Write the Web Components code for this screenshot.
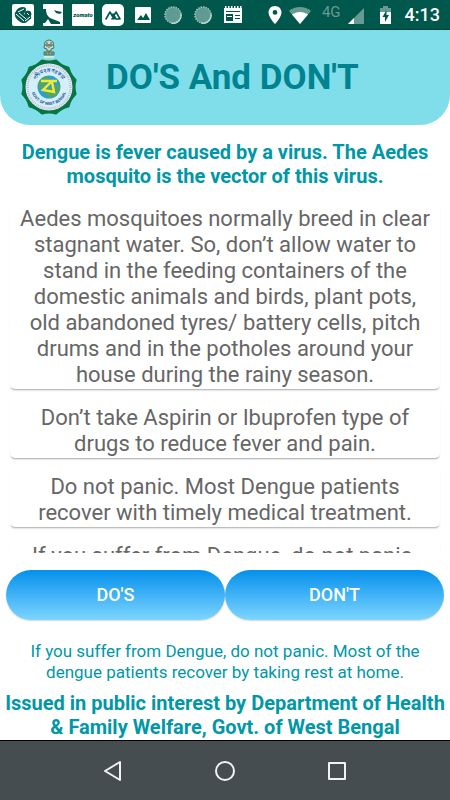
<!DOCTYPE html>
<html lang="en">
<head>
<meta charset="utf-8">
<meta name="viewport" content="width=device-width, initial-scale=1">
<title>DO'S And DON'T</title>
<style>
    body {
        margin: 0;
        background-color: #fff;
        font-family: Roboto, "Noto Sans", sans-serif;
    }
</style>
</head>
<body>
<dengue-app></dengue-app>

<template id="status-bar">
    <style>
    :host {
        display: flex;
        justify-content: space-between;
        align-items: center;
        box-sizing: border-box;
        height: 30px;
        padding: 0 10px 0 12px;
        background-color: #00574b;
        border-bottom: 1px solid #003c30;
        color: #fff;
    }
    div {
        display: flex;
        align-items: center;
    }
    .apps {
        gap: 8px;
    }
    svg {
        display: block;
    }
    .net {
        color: #669a93;
        font-size: 15px;
        line-height: 16px;
        margin: 0 6px 6px 9px;
    }
    .battery {
        margin: 0 14px 0 16px;
    }
    time {
        font-size: 18px;
        font-weight: 500;
        line-height: 20px;
    }
    </style>
    <div class="apps">
        <svg width="22" height="22" viewBox="0 0 22 22">
            <rect width="22" height="22" rx="2" fill="#fff"/>
            <g fill="#00574b" stroke="#00574b">
                <ellipse cx="9" cy="7" rx="5" ry="3" transform="rotate(-25 9 7)"/>
                <ellipse cx="9" cy="13" rx="7" ry="4" transform="rotate(42 9 13)"/>
                <circle cx="16" cy="10" r="3"/>
                <path d="M12 16L18 12L19 14L14 18Z"/>
            </g>
            <path d="M6 8L12 5M4 10L12 17M7 9L14 15M15 9L17 11M13 17L18 13" fill="none" stroke="#fff"/>
        </svg>
        <svg width="22" height="22" viewBox="0 0 22 22">
            <rect x="1" width="20" height="22" rx="1" fill="#fff"/>
            <path d="M1 5H4C4 9 5 12 8 14L18 18V20H9L6 15L3 19H1Z" fill="#00574b"/>
            <path d="M12 6L15 7L20 8L18 10L14 9Z" fill="#00574b"/>
        </svg>
        <svg width="22" height="22" viewBox="0 0 22 22">
            <rect width="22" height="22" rx="1" fill="#fff"/>
            <text x="11" y="13" text-anchor="middle" font-size="6" font-weight="900" font-style="italic" fill="#00574b">zomato</text>
        </svg>
        <svg width="22" height="22" viewBox="0 0 22 22">
            <rect width="22" height="22" rx="5" fill="#fff"/>
            <path d="M4 15L8 8L12 15M10 15L14 8L18 15H14L11 10" fill="none" stroke="#00574b" stroke-width="1.6" stroke-linejoin="round" stroke-linecap="round"/>
        </svg>
        <svg width="22" height="22" viewBox="0 0 22 22">
            <rect x="3" y="3" width="16" height="16" rx="1" fill="#fff"/>
            <path d="M5 16L9 11L11 14L14 9L18 16Z" fill="#00574b"/>
        </svg>
        <svg width="22" height="22" viewBox="0 0 22 22">
            <circle cx="11" cy="11" r="8" fill="#5f9b92"/>
            <circle cx="11" cy="11" r="8" fill="none" stroke="#9bc0ba" stroke-width="1.6" stroke-dasharray="1.5 1"/>
            <path d="M19 10A8 8 0 0 1 9 19" fill="none" stroke="#c9dedb" stroke-width="1.2"/>
        </svg>
        <svg width="22" height="22" viewBox="0 0 22 22">
            <circle cx="11" cy="11" r="8" fill="#5f9b92"/>
            <circle cx="11" cy="11" r="8" fill="none" stroke="#9bc0ba" stroke-width="1.6" stroke-dasharray="1.5 1"/>
            <path d="M19 10A8 8 0 0 1 9 19" fill="none" stroke="#c9dedb" stroke-width="1.2"/>
        </svg>
        <svg width="22" height="22" viewBox="0 0 22 22">
            <path d="M2 4H20V19H2Z" fill="#fff"/>
            <path d="M3 3H20" stroke="#fff" stroke-width="2" stroke-dasharray="1.5 1.5"/>
            <path d="M4 7H18V8H4ZM4 10H11V17H4ZM13 11H18V12H13ZM13 14H18V15H13Z" fill="#00574b"/>
            <path d="M5 12H10V13H5Z" fill="#fff"/>
        </svg>
    </div>
    <div>
        <svg width="24" height="22" viewBox="0 0 24 22">
            <path fill="#fff" fill-rule="evenodd" d="M12 2C8.300 2 5.500 4.800 5.500 8.400C5.500 13 12 20 12 20S18.500 13 18.500 8.400C18.500 4.800 15.700 2 12 2ZM12 6A2.400 2.400 0 1 1 12 10.800A2.400 2.400 0 1 1 12 6Z"/>
        </svg>
        <svg width="26" height="22" viewBox="0 0 26 22">
            <path fill="#669a93" d="M2 7C8 1.500 18 1.500 24 7L13 20Z"/>
            <path fill="#fff" d="M5 10.500C9 7 17 7 21 10.500L13 20Z"/>
        </svg>
        <span class="net">4G</span>
        <svg width="17" height="22" viewBox="0 0 17 22">
            <path fill="#669a93" d="M1 20L17 4V20Z"/>
            <path fill="#fff" d="M1 20L7 14V20Z"/>
        </svg>
        <svg class="battery" width="11" height="22" viewBox="0 0 11 22">
            <path fill="#669a93" d="M0 4H3V2H8V4H11V9H0Z"/>
            <path fill="#fff" d="M0 8H11V20H0Z"/>
            <path fill="#00574b" d="M6.500 6L2.500 13H5V18L9 11H6.500Z"/>
        </svg>
        <time>4:13</time>
    </div>
</template>

<template id="state-emblem">
    <style>
    :host {
        display: block;
    }
    svg {
        display: block;
    }
    </style>
    <svg width="58" height="78" viewBox="0 0 58 78" role="img" aria-label="State emblem">
        <g fill="none" stroke="#4f6f62" stroke-width="1">
            <path fill="#c8d9c9" d="M25 3Q29 -1 33 3L34 9L31 10V12H27V10L24 9Z"/>
            <path d="M27 3V8M31 3V8M29 5V9M25 6H33"/>
            <path fill="#9fb29f" d="M24 13H34V16H24Z"/>
            <path d="M26 13V16M29 13V16M32 13V16"/>
        </g>
        <path d="M24 18H34" stroke="#d5ead9" stroke-width="2"/>
        <g id="badge">
            <path fill="#087545" stroke="#087545" stroke-width="3" stroke-linejoin="round"/>
        </g>
        <circle cx="29" cy="48" r="23.500" fill="#e6eef5"/>
        <circle cx="29" cy="48" r="21.500" fill="none" stroke="#b3c1d8" stroke-width="2.500" stroke-dasharray="1 1"/>
        <circle cx="29" cy="48" r="20" fill="#d3effa"/>
        <circle cx="29" cy="48" r="11.500" fill="#2f9dd2"/>
        <path fill="#52a46c" d="M19 43L23 38L28 38L30 41L26 44L25 48L20 50L18 47ZM27 50L35 47L40 43L40 50L36 57L29 59L25 55Z"/>
        <path fill="none" stroke="#f6ed20" stroke-width="2.400" d="M21 42H37M31 43L23 51L34 53L32 43"/>
        <defs>
            <path id="upper" d="M14 48A15 15 0 0 1 44 48"/>
            <path id="lower" d="M11 48A18 18 0 0 0 47 48"/>
        </defs>
        <g fill="#244f9c" font-size="4" font-weight="700" text-anchor="middle">
            <text font-size="5"><textPath href="#upper" startOffset="50%">পশ্চিমবঙ্গ সরকার</textPath></text>
            <text><textPath href="#lower" startOffset="50%">GOVT. OF WEST BENGAL</textPath></text>
        </g>
    </svg>
</template>

<template id="page-header">
    <style>
    :host {
        display: flex;
        align-items: center;
        gap: 28px;
        box-sizing: border-box;
        height: 95px;
        padding: 0 20px;
        background-color: #80deea;
        border-radius: 0 0 30px 30px;
    }
    h1 {
        margin: 0;
        color: #00838f;
        font-size: 35px;
        line-height: 42px;
    }
    </style>
    <state-emblem></state-emblem>
    <h1><slot></slot></h1>
</template>

<template id="advice-card">
    <style>
    :host {
        display: block;
        flex: none;
        padding: 5px 8px 1px;
        border-radius: 5px;
        background-color: #fff;
        box-shadow: 0 2px 2px -1px rgba(0, 0, 0, 0.35);
        color: #666;
        font-size: 22px;
        line-height: 26px;
        text-align: center;
    }
    </style>
    <slot></slot>
</template>

<template id="tab-button">
    <style>
    :host {
        display: block;
        flex: 1;
    }
    button {
        display: block;
        width: 100%;
        height: 50px;
        padding: 0;
        border: 0;
        border-radius: 25px;
        background: linear-gradient(#0490ec, #7dd5ff);
        box-shadow: 0 1px 2px -1px rgba(0, 0, 0, 0.5);
        color: #fff;
        font: 500 18px/22px Roboto, sans-serif;
    }
    </style>
    <button type="button"><slot></slot></button>
</template>

<template id="nav-bar">
    <style>
    :host {
        display: flex;
        justify-content: center;
        gap: 64px;
        box-sizing: border-box;
        height: 60px;
        border-top: 1px solid #000;
        background-color: #454d51;
    }
    button {
        display: grid;
        place-items: center;
        width: 48px;
        padding: 0;
        border: 0;
        background: none;
    }
    svg {
        fill: none;
        stroke: #f2f2f2;
        stroke-width: 2;
        stroke-linejoin: round;
    }
    </style>
    <button type="button" aria-label="Back">
        <svg width="22" height="22" viewBox="0 0 22 22"><path d="M3 11L18 2V20Z"/></svg>
    </button>
    <button type="button" aria-label="Home">
        <svg width="22" height="22" viewBox="0 0 22 22"><circle cx="11" cy="11" r="9"/></svg>
    </button>
    <button type="button" aria-label="Recent apps">
        <svg width="22" height="22" viewBox="0 0 22 22"><path d="M3 3H19V19H3Z"/></svg>
    </button>
</template>

<template id="dengue-app">
    <style>
    :host {
        display: flex;
        flex-direction: column;
        height: 100vh;
    }
    p {
        margin: 0;
        color: #0097a7;
        text-align: center;
    }
    .intro, .issued {
        font-size: 20px;
        font-weight: 700;
        line-height: 24px;
    }
    .intro {
        padding: 15px 10px 12px;
    }
    .list {
        flex: 1;
        min-height: 0;
        display: flex;
        flex-direction: column;
        gap: 11px;
        padding: 1px 10px 0;
        overflow-y: auto;
        scrollbar-width: none;
    }
    .tabs {
        display: flex;
        padding: 17px 6px 21px;
    }
    .rest {
        padding: 0 20px 8px;
        font-size: 17px;
        line-height: 21px;
    }
    .issued {
        padding-bottom: 1px;
    }
    </style>
    <status-bar></status-bar>
    <page-header>DO'S And DON'T</page-header>
    <p class="intro">Dengue is fever caused by a virus. The Aedes mosquito is the vector of this virus.</p>
    <div class="list">
        <advice-card>Aedes mosquitoes normally breed in clear stagnant water. So, don’t allow water to stand in the feeding containers of the domestic animals and birds, plant pots, old abandoned tyres/ battery cells, pitch drums and in the potholes around your house during the rainy season.</advice-card>
        <advice-card>Don’t take Aspirin or Ibuprofen type of drugs to reduce fever and pain.</advice-card>
        <advice-card>Do not panic. Most Dengue patients recover with timely medical treatment.</advice-card>
        <advice-card>If you suffer from Dengue, do not panic.</advice-card>
    </div>
    <div class="tabs">
        <tab-button>DO'S</tab-button>
        <tab-button>DON'T</tab-button>
    </div>
    <p class="rest">If you suffer from Dengue, do not panic. Most of the dengue patients recover by taking rest at home.</p>
    <p class="issued">Issued in public interest by Department of Health &amp; Family Welfare, Govt. of West Bengal</p>
    <nav-bar></nav-bar>
</template>

<script>
// Base class, clones the template that has the same id as the tag
class TemplateElement extends HTMLElement{
    constructor(){
        super();
        this.attachShadow({mode: "open"});
        const template = document.getElementById(this.localName);
        this.shadowRoot.appendChild(template.content.cloneNode(true));
    }
}

class StatusBar extends TemplateElement{}
class PageHeader extends TemplateElement{}
class AdviceCard extends TemplateElement{}
class TabButton extends TemplateElement{}
class NavBar extends TemplateElement{}
class DengueApp extends TemplateElement{}

class StateEmblem extends TemplateElement{
    connectedCallback(){
        // Green rim with twelve scallops
        const points = 12;
        const at = (angle, r) => `${29 + r * Math.sin(angle)} ${48 - r * Math.cos(angle)}`;
        let d = `M${at(Math.PI / points, 27)}`;
        for(let i = 1; i <= points; i++){
            const mid = 2 * Math.PI * i / points;
            d += `Q${at(mid, 24)} ${at(mid + Math.PI / points, 27)}`;
        }
        this.shadowRoot.querySelector("#badge path").setAttribute("d", d + "Z");
    }
}

customElements.define("status-bar", StatusBar);
customElements.define("state-emblem", StateEmblem);
customElements.define("page-header", PageHeader);
customElements.define("advice-card", AdviceCard);
customElements.define("tab-button", TabButton);
customElements.define("nav-bar", NavBar);
customElements.define("dengue-app", DengueApp);
</script>
</body>
</html>
